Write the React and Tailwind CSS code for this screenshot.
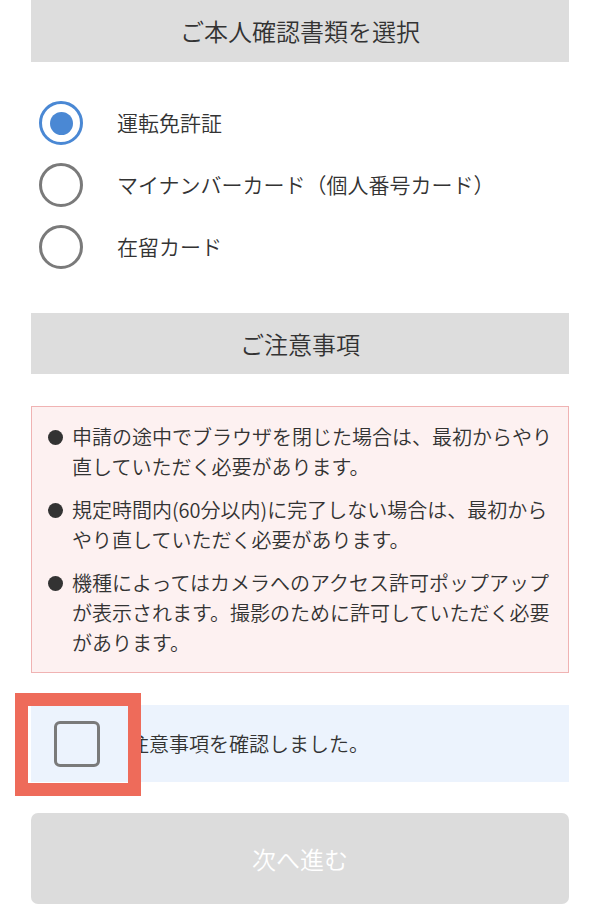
import React, { useState } from 'react';

const docTypes = [
  { id: 'license', label: '運転免許証' },
  { id: 'mynumber', label: 'マイナンバーカード（個人番号カード）' },
  { id: 'residence', label: '在留カード' },
];

const notes = [
  '申請の途中でブラウザを閉じた場合は、最初からやり直していただく必要があります。',
  '規定時間内(60分以内)に完了しない場合は、最初からやり直していただく必要があります。',
  '機種によってはカメラへのアクセス許可ポップアップが表示されます。撮影のために許可していただく必要があります。',
];

const SectionHeader = ({ children }) => (
  <div className="h-[61px] bg-[#dddddd] flex items-center justify-center text-[24px]">
    {children}
  </div>
);

const App = () => {
  const [selected, setSelected] = useState('license');
  const [confirmed, setConfirmed] = useState(false);

  return (
    <div
      className="w-[600px] min-h-[919px] bg-white px-[31px] text-[#333333] font-[350]"
      style={{ fontFamily: '"Noto Sans CJK JP", "Noto Sans", sans-serif' }}
    >
      <div className="h-[62px] bg-[#dddddd] flex items-center justify-center text-[24px]">
        ご本人確認書類を選択
      </div>

      {/* document type radios */}
      <div className="mt-[30px]">
        {docTypes.map((d) => {
          const on = selected === d.id;
          return (
            <div
              key={d.id}
              className="h-[62px] flex items-center cursor-pointer"
              onClick={() => setSelected(d.id)}
            >
              <div
                className={`ml-[8px] w-[44px] h-[44px] rounded-full border-[3px] flex items-center justify-center ${
                  on ? 'border-[#4a88d4]' : 'border-[#7a7a7a]'
                }`}
              >
                {on && <div className="w-[23px] h-[23px] rounded-full bg-[#4a88d4]" />}
              </div>
              <span className="ml-[34px] text-[21px]">{d.label}</span>
            </div>
          );
        })}
      </div>

      <div className="mt-[35px]">
        <SectionHeader>ご注意事項</SectionHeader>
      </div>

      {/* notes */}
      <div className="mt-[32px] border border-[#f0b3b3] bg-[#fdf1f1] pt-[15px] pb-[14px] pl-[16px] flex flex-col gap-[13px]">
        {notes.map((n, i) => (
          <div key={i} className="flex items-start">
            <div className="mt-[8px] w-[15px] h-[15px] rounded-full bg-[#333333] shrink-0" />
            <p className="ml-[9px] w-[490px] text-[20px] leading-[30px]">{n}</p>
          </div>
        ))}
      </div>

      {/* confirm checkbox */}
      <div
        className="relative mt-[32px] h-[77px] bg-[#ecf3fd] flex items-center cursor-pointer"
        onClick={() => setConfirmed(!confirmed)}
      >
        <div
          className={`ml-[23px] w-[46px] h-[46px] rounded-[6px] border-[3px] border-[#7a7a7a] flex items-center justify-center ${
            confirmed ? 'bg-[#4a88d4] border-[#4a88d4]' : ''
          }`}
        >
          {confirmed && (
            <svg width="26" height="26" viewBox="0 0 24 24" fill="none" stroke="white" strokeWidth="3">
              <path d="M5 12l5 5 9-10" />
            </svg>
          )}
        </div>
        <span className="ml-[29px] text-[20px]">注意事項を確認しました。</span>
        <div className="absolute left-[-16px] top-[-12px] w-[126px] h-[103px] border-[13px] border-[#ee6b5a] pointer-events-none" />
      </div>

      <button
        disabled={!confirmed}
        className={`mt-[31px] w-full h-[91px] rounded-[7px] text-[24px] text-white ${
          confirmed ? 'bg-[#4a88d4]' : 'bg-[#dcdcdc]'
        }`}
      >
        次へ進む
      </button>
    </div>
  );
};

export default App;
